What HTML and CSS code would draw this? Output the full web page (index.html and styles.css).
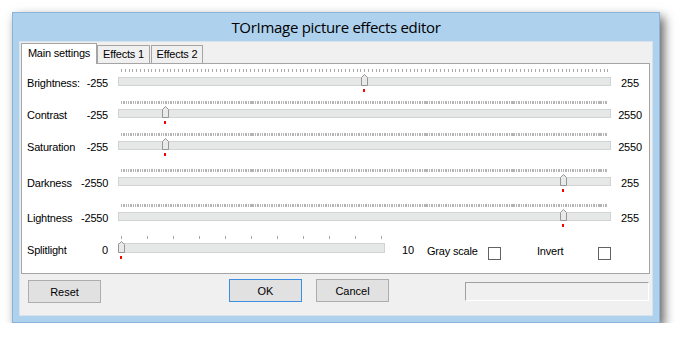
FILE: index.html
```html
<!DOCTYPE html>
<html lang="en">
<head>
  <meta charset="UTF-8" />
  <title>TOrImage picture effects editor</title>
  <link rel="stylesheet" href="styles.css">
</head>
<body>

  <div class="window">
    <div class="titlebar">TOrImage picture effects editor</div>

    <div class="client">
      <div class="tabs">
        <div class="tab tab-active">Main settings</div>
        <div class="tab tab-e1">Effects 1</div>
        <div class="tab tab-e2">Effects 2</div>
      </div>

      <div class="panel">
        <div class="row">
          <span class="label">Brightness:</span>
          <span class="min">-255</span>
          <div class="slider" style="--pos: 243px">
            <div class="ticks ticks-coarse"></div>
            <div class="track"></div>
            <svg class="thumb" viewBox="0 0 7 12"><polygon points="0.5,3.5 3.5,0.5 6.5,3.5 6.5,11.5 0.5,11.5" /></svg>
            <span class="mark"></span>
          </div>
          <span class="max">255</span>
        </div>

        <div class="row">
          <span class="label">Contrast</span>
          <span class="min">-255</span>
          <div class="slider" style="--pos: 44px">
            <div class="ticks ticks-fine"></div>
            <div class="track"></div>
            <svg class="thumb" viewBox="0 0 7 12"><polygon points="0.5,3.5 3.5,0.5 6.5,3.5 6.5,11.5 0.5,11.5" /></svg>
            <span class="mark"></span>
          </div>
          <span class="max">2550</span>
        </div>

        <div class="row">
          <span class="label">Saturation</span>
          <span class="min">-255</span>
          <div class="slider" style="--pos: 44px">
            <div class="ticks ticks-fine"></div>
            <div class="track"></div>
            <svg class="thumb" viewBox="0 0 7 12"><polygon points="0.5,3.5 3.5,0.5 6.5,3.5 6.5,11.5 0.5,11.5" /></svg>
            <span class="mark"></span>
          </div>
          <span class="max">2550</span>
        </div>

        <div class="row row-darkness">
          <span class="label">Darkness</span>
          <span class="min">-2550</span>
          <div class="slider" style="--pos: 442px">
            <div class="ticks ticks-fine"></div>
            <div class="track"></div>
            <svg class="thumb" viewBox="0 0 7 12"><polygon points="0.5,3.5 3.5,0.5 6.5,3.5 6.5,11.5 0.5,11.5" /></svg>
            <span class="mark"></span>
          </div>
          <span class="max">255</span>
        </div>

        <div class="row row-lightness">
          <span class="label">Lightness</span>
          <span class="min">-2550</span>
          <div class="slider" style="--pos: 442px">
            <div class="ticks ticks-fine"></div>
            <div class="track"></div>
            <svg class="thumb" viewBox="0 0 7 12"><polygon points="0.5,3.5 3.5,0.5 6.5,3.5 6.5,11.5 0.5,11.5" /></svg>
            <span class="mark"></span>
          </div>
          <span class="max">255</span>
        </div>

        <div class="row row-split">
          <span class="label">Splitlight</span>
          <span class="min">0</span>
          <div class="slider slider-split" style="--pos: 0px">
            <div class="ticks ticks-split"></div>
            <div class="track"></div>
            <svg class="thumb" viewBox="0 0 7 12"><polygon points="0.5,3.5 3.5,0.5 6.5,3.5 6.5,11.5 0.5,11.5" /></svg>
            <span class="mark"></span>
          </div>
          <div class="opts">
            <span class="split-max">10</span>
            <span class="opt-label">Gray scale</span>
            <span class="check check-gray"></span>
            <span class="opt-label">Invert</span>
            <span class="check"></span>
          </div>
        </div>
      </div>

      <div class="footer">
        <button class="btn btn-reset">Reset</button>
        <button class="btn btn-ok">OK</button>
        <button class="btn btn-cancel">Cancel</button>
        <div class="status"></div>
      </div>
    </div>
  </div>

</body>
</html>
```

FILE: styles.css
```css
body {
  margin: 0;
  background: #fff;
  font-family: "Liberation Sans", Arial, sans-serif;
  font-size: 11px;
  color: #000;
}
.window {
  margin: 12px 0 0 12px;
  width: 648px;
  height: 311px;
  box-sizing: border-box;
  background: #aed1ee;
  border: 1px solid #8cb3d9;
  padding: 0 6px 6px 6px;
  display: flex;
  flex-direction: column;
  box-shadow: 4px 5px 10px rgba(0, 0, 0, 0.62);
}
.titlebar {
  height: 28px;
  box-sizing: border-box;
  padding-top: 4px;
  text-align: center;
  font-family: "Open Sans", sans-serif;
  font-size: 15px;
  line-height: 20px;
  letter-spacing: -0.3px;
}
.client {
  flex: 1;
  background: #f0f0f0;
  border: 1px solid #d9e2ea;
  display: flex;
  flex-direction: column;
}

/* tabs */
.tabs {
  display: flex;
  align-items: flex-end;
  height: 21px;
  padding-left: 1px;
  position: relative;
  z-index: 1;
}
.tab {
  height: 18px;
  box-sizing: border-box;
  border: 1px solid #a5a5a5;
  border-bottom: none;
  padding-top: 1px;
  line-height: 14px;
  text-align: center;
  letter-spacing: -0.2px;
}
.tab-active {
  width: 76px;
  height: 21px;
  margin-bottom: -1px;
  padding-top: 2px;
  background: #fff;
}
.tab-e1 {
  width: 53px;
}
.tab-e2 {
  width: 52px;
  margin-left: 1px;
}

/* main panel */
.panel {
  height: 211px;
  box-sizing: border-box;
  margin: 0 2px 0 1px;
  background: #fff;
  border: 1px solid #a5a5a5;
  padding: 4px 0 0 5px;
}
.row {
  display: grid;
  grid-template-columns: 54px 27px 503px 1fr;
  height: 32px;
}
.row-darkness {
  margin-top: 4px;
}
.row-lightness {
  margin-top: 3px;
}
.row-split {
  margin-top: -1px;
  grid-template-columns: 54px 27px 277px 1fr;
}
.label, .min, .max, .opts {
  padding-top: 8px;
  line-height: 14px;
  letter-spacing: -0.2px;
  white-space: nowrap;
}
.row-split .label, .row-split .min {
  padding-top: 9px;
}
.min {
  text-align: right;
}
.max {
  text-align: center;
}

.slider {
  position: relative;
  margin-left: 10px;
  padding-top: 1px;
}
.ticks {
  height: 3px;
  margin: 0 3px 5px;
}
.ticks-coarse {
  background: repeating-linear-gradient(to right, #ababab 0 1px, transparent 1px 3.8px);
}
.ticks-fine {
  background: repeating-linear-gradient(to right, #b4b4b4 0 1px, transparent 1px 1.74px);
}
.ticks-split {
  background: repeating-linear-gradient(to right, #a8a8a8 0 1px, transparent 1px 26px);
}
.slider-split {
  padding-top: 2px;
}
.slider-split .ticks {
  margin-bottom: 4px;
}
.track {
  height: 9px;
  box-sizing: border-box;
  background: #e6e8e8;
  border: 1px solid #d2d4d4;
}
.slider-split .track {
  height: 10px;
}
.thumb {
  position: absolute;
  top: 6px;
  left: var(--pos);
  width: 7px;
  height: 12px;
}
.thumb polygon {
  fill: #e9e9e9;
  stroke: #969696;
  stroke-width: 1;
}
.mark {
  position: absolute;
  top: 21px;
  left: calc(var(--pos) + 2px);
  width: 2px;
  height: 3px;
  background: #f00;
}
.slider-split .thumb {
  top: 7px;
}
.slider-split .mark {
  top: 22px;
}

/* options after splitlight */
.opts {
  display: flex;
  align-items: flex-start;
  padding-top: 10px;
}
.split-max {
  width: 25px;
  margin-left: 17px;
  margin-top: -1px;
}
.opt-label {
  width: 61px;
}
.check {
  width: 13px;
  height: 13px;
  box-sizing: border-box;
  margin-top: 3px;
  border: 1px solid #626262;
  background: #fff;
}
.check-gray {
  margin-right: 36px;
}

/* bottom buttons */
.footer {
  display: flex;
  align-items: flex-start;
  height: 41px;
  box-sizing: border-box;
  padding-top: 5px;
}
.btn {
  width: 73px;
  height: 23px;
  padding: 0;
  background: #e1e1e1;
  border: 1px solid #adadad;
  font-family: "Liberation Sans", Arial, sans-serif;
  font-size: 11px;
  color: #000;
}
.btn-reset {
  margin: 1px 0 0 8px;
}
.btn-ok {
  margin-left: 128px;
  border-color: #3d8ee0;
}
.btn-cancel {
  margin-left: 14px;
}
.status {
  width: 184px;
  height: 19px;
  box-sizing: border-box;
  margin: 3px 0 0 76px;
  border: 1px solid #fff;
  border-top-color: #a0a0a0;
  border-left-color: #a0a0a0;
}
```
